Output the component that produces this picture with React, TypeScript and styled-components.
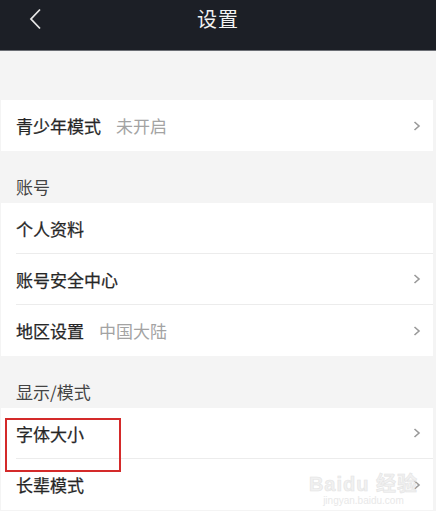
import styled, { createGlobalStyle } from "styled-components";

const GlobalStyle = createGlobalStyle`
  html, body {
    margin: 0;
    padding: 0;
    background: #f4f4f4;
    font-family: "Noto Sans CJK SC", "Noto Sans", sans-serif;
  }
`;

const Page = styled.div`
  width: 436px;
  height: 511px;
  overflow: hidden;
  position: relative;
  background: #f4f4f4;
`;

const Header = styled.header`
  height: 50px;
  background: #1c1f26;
  border-bottom: 1px solid #6b6e74;
  display: flex;
  align-items: center;
  justify-content: center;
  position: relative;
`;

const BackButton = styled.button`
  position: absolute;
  left: 24px;
  top: 7px;
  width: 22px;
  height: 24px;
  padding: 0;
  border: 0;
  background: none;
  display: flex;
  align-items: center;
  justify-content: center;
`;

const Title = styled.h1`
  margin: 0 0 14px;
  font-size: 20px;
  font-weight: 400;
  color: #f2f2f2;
  letter-spacing: 1px;
`;

const Body = styled.main`
  padding: 0 3px 0 1px;
`;

const Spacer = styled.div`
  height: 49px;
`;

const SectionLabel = styled.div`
  height: 52px;
  box-sizing: border-box;
  display: flex;
  align-items: flex-end;
  padding: 0 15px 4px;
  font-size: 17px;
  color: #444;
`;

const Group = styled.section`
  background: #fff;
`;

const Row = styled.div<{ $last?: boolean }>`
  height: 51px;
  box-sizing: border-box;
  display: flex;
  align-items: center;
  margin-left: 15px;
  padding-right: 12px;
  border-bottom: ${(p) => (p.$last ? "0" : "1px solid #ececec")};
  position: relative;
`;

const Label = styled.span`
  font-size: 17px;
  font-weight: 400;
  color: #262626;
  -webkit-text-stroke: 0.25px #262626;
`;

const Value = styled.span`
  font-size: 17px;
  color: #a3a3a3;
  margin-left: 15px;
`;

const Chevron = styled.svg`
  margin-left: auto;
  width: 8px;
  height: 10px;
`;

const Highlight = styled.div`
  position: absolute;
  left: -11px;
  top: 10px;
  width: 116px;
  height: 54px;
  box-sizing: border-box;
  border: 2px solid #d42a2a;
  z-index: 2;
`;

const Watermark = styled.div`
  position: absolute;
  right: 18px;
  bottom: 4px;
  display: flex;
  flex-direction: column;
  align-items: center;
  color: #f1f1f1;
  pointer-events: none;
  font-family: "Liberation Sans", "Noto Sans CJK SC", sans-serif;
`;

const WatermarkBrand = styled.div`
  font-size: 20px;
  font-weight: 700;
  letter-spacing: 1px;
  line-height: 1;
  -webkit-text-stroke: 0.6px #e4e4e4;
`;

const WatermarkUrl = styled.div`
  font-size: 10px;
  line-height: 1.3;
  color: #e8e8e8;
`;

const Arrow = () => (
  <Chevron viewBox="0 0 8 10">
    <path d="M1.5 1 L6 5 L1.5 9" fill="none" stroke="#9a9a9a" strokeWidth="1.6" />
  </Chevron>
);

type Item = { label: string; value?: string; arrow?: boolean; marked?: boolean };

const ItemRow = ({ item, last }: { item: Item; last?: boolean }) => (
  <Row $last={last}>
    <Label>{item.label}</Label>
    {item.value && <Value>{item.value}</Value>}
    {item.arrow && <Arrow />}
    {item.marked && <Highlight />}
  </Row>
);

const RowGroup = ({ items }: { items: Item[] }) => (
  <Group>
    {items.map((it, i) => (
      <ItemRow key={it.label} item={it} last={i === items.length - 1} />
    ))}
  </Group>
);

export default function App() {
  return (
    <Page>
      <GlobalStyle />
      <Header>
        <BackButton aria-label="返回">
          <svg width="14" height="22" viewBox="0 0 14 22">
            <path d="M12 1.5 L3 11 L12 20.5" fill="none" stroke="#e6e6e6" strokeWidth="1.8" />
          </svg>
        </BackButton>
        <Title>设置</Title>
      </Header>
      <Body>
        <Spacer />
        <RowGroup items={[{ label: "青少年模式", value: "未开启", arrow: true }]} />
        <SectionLabel>账号</SectionLabel>
        <RowGroup
          items={[
            { label: "个人资料" },
            { label: "账号安全中心", arrow: true },
            { label: "地区设置", value: "中国大陆", arrow: true },
          ]}
        />
        <SectionLabel>显示/模式</SectionLabel>
        <RowGroup
          items={[
            { label: "字体大小", arrow: true, marked: true },
            { label: "长辈模式", arrow: true },
          ]}
        />
      </Body>
      <Watermark>
        <WatermarkBrand>Baidu 经验</WatermarkBrand>
        <WatermarkUrl>jingyan.baidu.com</WatermarkUrl>
      </Watermark>
    </Page>
  );
}
